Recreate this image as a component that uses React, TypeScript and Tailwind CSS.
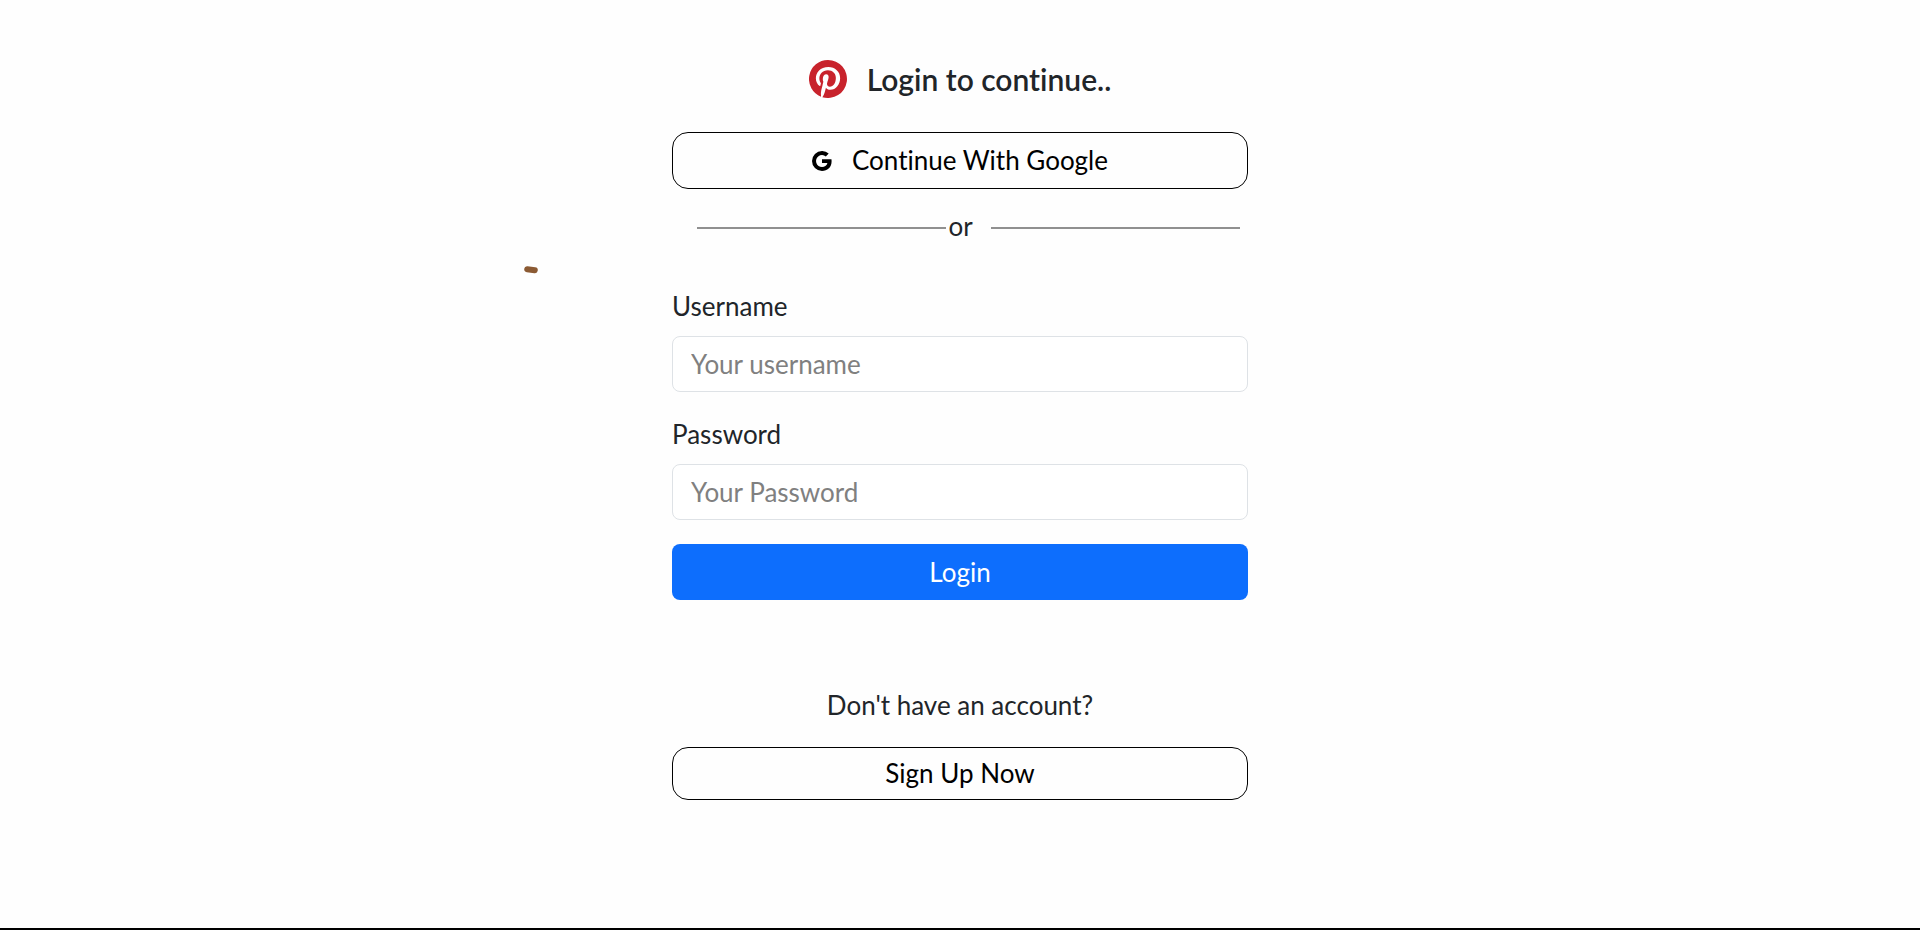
import { BsGoogle, BsPinterest } from "react-icons/bs";

type FieldProps = {
  id: string;
  label: string;
  type: string;
  placeholder: string;
};

function Field({ id, label, type, placeholder }: FieldProps) {
  return (
    <div className="mb-6">
      <label htmlFor={id} className="mb-3 block leading-9">
        {label}
      </label>
      <input
        id={id}
        type={type}
        placeholder={placeholder}
        className="h-14 w-full rounded-lg border border-[#dee2e6] bg-white px-[18px] placeholder:text-[#808080] placeholder:opacity-100"
      />
    </div>
  );
}

export default function App() {
  return (
    <main className="relative min-h-screen border-b-2 border-black bg-[#fefefe] px-4 pt-[60px] font-['Lato','Open_Sans',sans-serif] text-[26px] text-[#212529] [font-variant-ligatures:none]">
      <svg
        className="absolute top-[265px] left-[calc(50%-437px)] h-[9px] w-4"
        viewBox="0 0 16 9"
        aria-hidden="true"
      >
        <path d="M4.2 4.2 L11.8 5.2" stroke="#8b5a33" strokeWidth="6" strokeLinecap="round" />
      </svg>

      <div className="mx-auto w-full max-w-xl">
        <header className="mb-[34px] flex items-center justify-center gap-5">
          <BsPinterest className="size-[38px] text-[#c8232c]" aria-hidden="true" />
          <h1 className="text-3xl leading-9 font-semibold">Login to continue..</h1>
        </header>

        <button
          type="button"
          className="flex h-[57px] w-full items-center justify-center gap-5 rounded-2xl border border-black text-black"
        >
          <BsGoogle className="size-5" aria-hidden="true" />
          <span>Continue With Google</span>
        </button>

        <div className="mt-[19px] flex items-center pr-2 pl-[25px]">
          <hr className="h-0.5 flex-1 border-0 bg-[#909090]" />
          <span className="mr-[18px] ml-0.5 pb-1 leading-9">or</span>
          <hr className="h-0.5 flex-1 border-0 bg-[#909090]" />
        </div>

        <form className="mt-10" onSubmit={(event) => event.preventDefault()}>
          <Field id="username" label="Username" type="text" placeholder="Your username" />
          <Field id="password" label="Password" type="password" placeholder="Your Password" />
          <button type="submit" className="h-14 w-full rounded-lg bg-[#0d6efd] text-white">
            Login
          </button>
        </form>

        <p className="mt-[87px] text-center leading-9">Don't have an account?</p>
        <button
          type="button"
          className="mt-6 h-[53px] w-full rounded-2xl border border-black text-black"
        >
          Sign Up Now
        </button>
      </div>
    </main>
  );
}
